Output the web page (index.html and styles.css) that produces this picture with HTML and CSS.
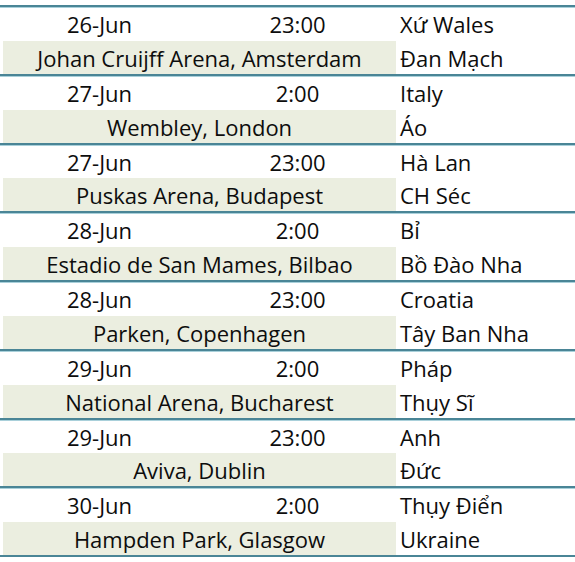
FILE: index.html
```html
<!DOCTYPE html>
<html lang="vi">
<head>
<meta charset="utf-8">
<title>Lịch thi đấu</title>
<link rel="stylesheet" href="styles.css">
</head>
<body>
<div class="schedule">
  <div class="match">
    <div class="cell date">26-Jun</div><div class="cell time">23:00</div><div class="cell team">Xứ Wales</div>
    <div class="cell venue">Johan Cruijff Arena, Amsterdam</div><div class="cell team">Đan Mạch</div>
  </div>
  <div class="match">
    <div class="cell date">27-Jun</div><div class="cell time">2:00</div><div class="cell team">Italy</div>
    <div class="cell venue">Wembley, London</div><div class="cell team">Áo</div>
  </div>
  <div class="match">
    <div class="cell date">27-Jun</div><div class="cell time">23:00</div><div class="cell team">Hà Lan</div>
    <div class="cell venue">Puskas Arena, Budapest</div><div class="cell team">CH Séc</div>
  </div>
  <div class="match">
    <div class="cell date">28-Jun</div><div class="cell time">2:00</div><div class="cell team">Bỉ</div>
    <div class="cell venue">Estadio de San Mames, Bilbao</div><div class="cell team">Bồ Đào Nha</div>
  </div>
  <div class="match">
    <div class="cell date">28-Jun</div><div class="cell time">23:00</div><div class="cell team">Croatia</div>
    <div class="cell venue">Parken, Copenhagen</div><div class="cell team">Tây Ban Nha</div>
  </div>
  <div class="match">
    <div class="cell date">29-Jun</div><div class="cell time">2:00</div><div class="cell team">Pháp</div>
    <div class="cell venue">National Arena, Bucharest</div><div class="cell team">Thụy Sĩ</div>
  </div>
  <div class="match">
    <div class="cell date">29-Jun</div><div class="cell time">23:00</div><div class="cell team">Anh</div>
    <div class="cell venue">Aviva, Dublin</div><div class="cell team">Đức</div>
  </div>
  <div class="match">
    <div class="cell date">30-Jun</div><div class="cell time">2:00</div><div class="cell team">Thụy Điển</div>
    <div class="cell venue">Hampden Park, Glasgow</div><div class="cell team">Ukraine</div>
  </div>
</div>
</body>
</html>
```
FILE: styles.css
```css
html, body {
  margin: 0;
  padding: 0;
  background: #ffffff;
}

body {
  font-family: "Open Sans", Lato, sans-serif;
  font-size: 22px;
  color: #0d0d0d;
}

.schedule {
  width: 575px;
  margin-top: 5px;
  border-bottom: 2px solid #4a8596;
  box-shadow: 0 1px 0 #a9d0da;
}

.match {
  display: grid;
  grid-template-columns: 199px 197px 1fr;
  grid-template-rows: 33.875px 32.875px;
  border-top: 2px solid #4a8596;
  box-shadow: inset 0 1px 0 #a9d0da;
}

.cell {
  line-height: 32px;
  padding-top: 1px;
  white-space: nowrap;
}

.date,
.time {
  text-align: center;
}

.team {
  padding-left: 4px;
}

.venue {
  grid-column: 1 / span 2;
  margin-left: 3px;
  background: #ebeee0;
  text-align: center;
}
```
